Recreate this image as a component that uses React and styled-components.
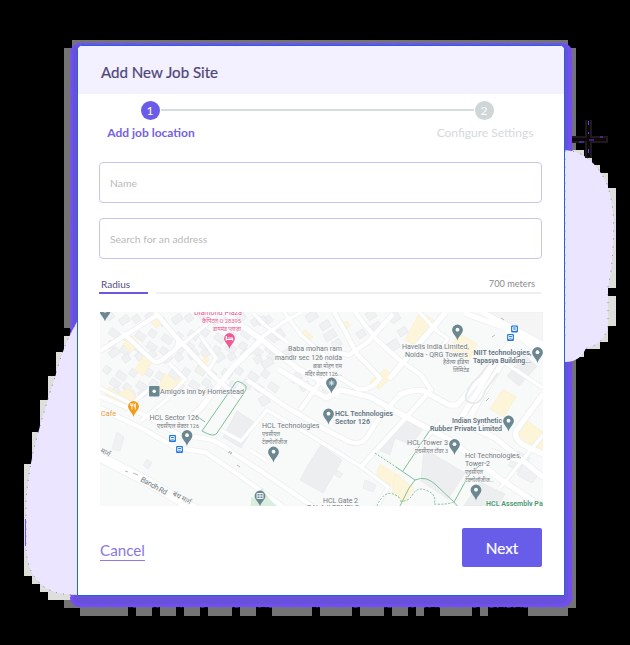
import React from 'react';
import styled, { createGlobalStyle } from 'styled-components';

const GlobalStyle = createGlobalStyle`
  * { box-sizing: border-box; }
  body { margin: 0; background: #000; font-family: Lato, sans-serif; }
`;

const Stage = styled.main`
  position: relative;
  width: 630px;
  height: 645px;
  padding: 45px 64px 0 77px;
  background: #000;
  overflow: hidden;
`;

const Backdrop = styled.svg`
  position: absolute;
  inset: 0;
`;

const Card = styled.section`
  position: relative;
  width: 488px;
  height: 551px;
  border: 1px solid #1f66d8;
  border-radius: 5px 5px 0 0;
  background: #fff;
  overflow: hidden;
`;

const Header = styled.header`
  height: 48px;
  padding: 3px 23px 0;
  display: flex;
  align-items: center;
  background: #f3f0ff;
`;

const Title = styled.h1`
  margin: 0;
  font-size: 15.1px;
  line-height: 20px;
  font-weight: 400;
  color: #4d4677;
  -webkit-text-stroke: 0.2px #4d4677;
`;

const Stepper = styled.div`
  display: grid;
  grid-template-columns: 88px 1fr 98px;
  height: 48px;
  margin: 6px 30px 0 29px;
`;

const Step = styled.div`
  display: flex;
  flex-direction: column;
  align-items: center;
  white-space: nowrap;
  font-size: 12px;
  line-height: 16px;
  font-weight: ${(p) => (p.$active ? 700 : 400)};
  color: ${(p) => (p.$active ? '#7561e2' : '#d5d9dc')};
`;

const StepDot = styled.span`
  display: grid;
  place-items: center;
  width: 19px;
  height: 19px;
  margin: 1px 2px 5px 0;
  border-radius: 50%;
  font-size: 12px;
  font-weight: 400;
  color: #fff;
  background: ${(p) => (p.$active ? '#6a5be9' : '#ced6d8')};
`;

const StepLine = styled.div`
  height: 2px;
  margin: 9px -38px 0 -34px;
  background: #d7dcde;
`;

const Form = styled.div`
  padding: 14px 22px 0 21px;
`;

const Field = styled.input`
  display: block;
  width: 443px;
  height: 41px;
  margin-bottom: 15px;
  padding: 0 10px;
  border: 1px solid #c9c3ee;
  border-radius: 4px;
  outline: 0;
  background: #fff;
  font: 400 10.4px Lato, sans-serif;
  color: #444;
  &::placeholder { color: #b9b9bb; opacity: 1; }
`;

const RadiusRow = styled.div`
  display: grid;
  grid-template-columns: 49px 1fr;
  column-gap: 8px;
  width: 442px;
  height: 20px;
  margin-top: 15px;
`;

const RadiusLabel = styled.div`
  padding-left: 2px;
  height: 20px;
  border-bottom: 2px solid #6a59df;
  font-size: 10px;
  line-height: 21px;
  color: #554b84;
`;

const RadiusValue = styled.div`
  height: 20px;
  padding-right: 6px;
  border-bottom: 2px solid #efeff1;
  text-align: right;
  font-size: 9.2px;
  line-height: 19px;
  color: #8b8b8d;
`;

const MapView = styled.svg`
  display: block;
  margin: 18px 0 0 1px;
`;

const Footer = styled.footer`
  display: flex;
  justify-content: space-between;
  align-items: center;
  width: 443px;
  height: 39px;
  margin-top: 22px;
  padding-left: 1px;
`;

const CancelLink = styled.button`
  height: 20px;
  margin-top: 6px;
  padding: 0;
  border: 0;
  border-bottom: 1px solid #8d7be7;
  background: none;
  font: 400 15.2px/18px Lato, sans-serif;
  color: #8977e4;
`;

const NextButton = styled.button`
  width: 80px;
  height: 39px;
  padding: 0;
  border: 0;
  border-radius: 2px;
  background: #685de9;
  color: #fff;
  font: 400 15.3px Lato, sans-serif;
  -webkit-text-stroke: 0.2px #fff;
`;

const streets = [
  [5, 'M100 351L159 314M123 333L152 360Q156 364 162 360L175 350Q181 342 176 336M155 312L177 338L213 376L240 399'],
  [6, 'M262 339L233 367L201 408L188 420M224 312L240 324L262 340L298 369L316 378L338 396'],
  [4, 'M169 363L185 379L167 399L141 421M100 388L132 404L150 388M175 350L207 324L218 312M201 337L216 358L208 371'],
  [4, 'M262 337L285 321L302 312M253 313L266 326L288 343M284 312L301 335L318 350L333 363'],
  [5, 'M334 312L345 331L357 354L380 378Q372 391 358 389L334 374L320 382L300 410'],
  [5, 'M329 351L349 355L368 342L393 314M355 312L376 339L397 358L421 375L431 390L400 424L360 468'],
  [6, 'M278 369L326 398L341 390L370 397L395 411L450 440L500 479L541 506'],
  [5, 'M247 380L288 408L326 430L350 442Q363 446 369 434L377 421L399 396'],
  [5, 'M100 396L149 417L181 436L202 438Q219 440 233 453L267 475L312 506'],
  [5, 'M100 408L145 430L176 448L205 452L236 473L282 506'],
  [4, 'M221 430L241 441L267 410L308 434L360 466L388 487L377 507M250 450L267 461'],
  [10, 'M98 456L150 483L203 514'],
  [6, 'M399 395Q413 389 424 391L449 405L457 405L499 357L525 325M446 312L405 360L389 379'],
  [6, 'M499 355L478 391L459 421L495 438L544 478M513 346L486 389L471 415'],
  [6, 'M464 313L511 330L543 355M543 394L516 431Q514 438 522 444L543 454'],
  [4, 'M419 312L437 331L448 339L433 357M486 350L504 362L543 388M440 422L410 458M491 450L521 462L543 435M500 488L521 462'],
];

const SAND = '#fdf5da';
const GREY = '#eceef0';
const PALE = '#eff1f2';

const buildings = [
  [SAND, '132 336 140 345 130 352 123 344'],
  [SAND, '143 356 153 361 143 376 135 370'],
  [SAND, '109 387 119 394 128 388 139 401 127 411 104 399'],
  [SAND, '165 373 175 381 180 377 178 393 162 391 159 385'],
  [SAND, '205 356 209 359 203 371 199 368'],
  [SAND, '157 317 162 323 156 328 151 322'],
  [SAND, '305 330 313 337 306 342 299 334'],
  [SAND, '347 321 350 326 344 330 341 324'],
  [SAND, '385 369 394 376 379 389 369 382'],
  [SAND, '420 312 437 322 416 346 405 340'],
  [SAND, '458 333 477 344 469 361 450 350'],
  [SAND, '503 389 516 397 504 417 490 409'],
  [SAND, '524 418 543 432 543 450 516 438'],
  [SAND, '380 464 401 477 395 488 376 476'],
  [SAND, '395 474 414 488 405 503 392 493'],
  [GREY, '321 445 342 460 323 493 300 480 308 465'],
  [GREY, '402 419 423 429 411 445 395 438 390 455 379 450'],
  [GREY, '424 449 465 473 448 499 421 481'],
  [GREY, '480 482 505 494 498 506 464 506'],
  [GREY, '237 411 256 423 241 448 223 437'],
  [PALE, '518 451 530 458 520 473 508 465'],
  [PALE, '523 464 540 473 532 483 517 475'],
  [GREY, '524 355 537 366 519 386 507 376'],
  [PALE, '117 432 124 437 120 451 112 449'],
  [PALE, '147 459 152 463 148 469 143 465'],
  [PALE, '337 470 343 474 340 478 335 475'],
  [PALE, '365 480 376 485 373 492 363 488'],
];

// Small house footprints: x, y, width, height, rotation
const houses = Array.from({ length: 92 }, (_, i) => {
  const row = Math.floor(i / 13);
  const col = i % 13;
  return [
    105 + col * 13.2 + ((row * 7) % 9),
    315 + row * 12.5 + ((col * 5) % 7),
    7 + ((i * 3) % 6),
    7 + ((i * 5) % 5),
    row % 3 === 0 ? -35 : 35,
  ];
}).filter(([x, y]) => y < 402 - (x - 105) * 0.12);

const blocks = [
  [305, 316, 11, 8], [319, 325, 10, 7], [323, 335, 12, 8], [273, 333, 9, 9], [256, 320, 9, 7],
  [365, 314, 9, 8], [369, 327, 11, 7], [388, 316, 10, 9], [384, 346, 14, 9], [397, 331, 9, 7],
  [261, 363, 11, 7], [289, 377, 11, 8], [299, 386, 10, 7], [258, 399, 9, 9], [322, 390, 10, 8],
  [282, 352, 8, 8], [331, 343, 9, 7], [356, 333, 8, 7],
];

const pins = [
  [105, 312], [457.5, 331], [537.5, 353.5], [331.5, 384, 'swirl'], [328.5, 415], [508.5, 422],
  [187, 436.5], [273.5, 453], [454.5, 445.5], [476, 491], [260, 497, 'grid'],
];

function Pin({ x, y, kind, color = '#6b8791' }) {
  return (
    <g transform={`translate(${x} ${y})`}>
      <path d="M0 9.5C-1 5-5.4 2.6-5.4-1A5.4 5.4 0 0 1 5.4-1C5.4 2.6 1 5 0 9.5Z" fill={color} />
      {!kind && <circle cy="-1.3" r="1.9" fill="#fff" />}
      {kind === 'swirl' && <path d="M-2.8-1H2.8M0-3.8V1.8M-2-3L2 1M2-3L-2 1" stroke="#e7eef0" strokeWidth=".8" />}
      {kind === 'grid' && <path d="M-3-3.5H3V1.5H-3ZM0-3.5V1.5M-3-1H3" fill="none" stroke="#fff" strokeWidth=".9" />}
      {kind === 'food' && <path d="M-1.6-4V2M-2.8-4V-2H-.5V-4M1.8 2V-4Q.4-2 .8-.5H1.8" fill="none" stroke="#fff" strokeWidth=".9" />}
      {kind === 'bed' && <path d="M-3.2-3.5V1M-3 0H3.2V1M-1.8-1.5H2.8V0" fill="none" stroke="#fff" strokeWidth="1.2" />}
    </g>
  );
}

function Transit({ x, y }) {
  return (
    <g transform={`translate(${x} ${y})`}>
      <rect x="-3.4" y="-3.4" width="6.8" height="6.8" rx="1" fill="#1f73e8" />
      <path d="M-1.8-2H1.8V1.5H-1.8ZM-1.8 0H1.8" fill="none" stroke="#fff" strokeWidth=".9" />
    </g>
  );
}

const Label = styled.text`
  font-family: Roboto, 'Noto Sans', sans-serif;
  font-size: ${(p) => p.$size || 7}px;
  font-weight: ${(p) => (p.$bold ? 600 : 400)};
  fill: ${(p) => p.$color || '#737b82'};
  paint-order: stroke;
  stroke: #fafafa;
  stroke-width: 1px;
`;

// Label text, x, baseline, width, anchor, colour, bold, font size
const labels = [
  ['Diamond Plaza', 242, 315, 48, 'end', '#e85b94'],
  ['कैपिटल O 28395', 241, 322.5, 39, 'end', '#e85b94', false, 6],
  ['डायमंड प्लाज़ा', 241, 331, 28, 'end', '#e85b94', false, 6],
  ["Amigo's inn by Homestead", 160, 394, 84, 'start'],
  ['Cafe', 101, 416, 15, 'start', '#ed9a35'],
  ['HCL Sector 126', 149.5, 420, 49.5, 'start'],
  ['एचसीएल सेक्टर 126', 157, 428, 42, 'start', null, false, 6],
  ['HCL Technologies', 262, 428, 57.5, 'start'],
  ['एचसीएल', 262, 436, 18, 'start', null, false, 6],
  ['टेक्नोलॉजीज', 262, 444, 25, 'start', null, false, 6],
  ['HCL Technologies', 335, 416, 58, 'start', '#5f747f', true],
  ['Sector 126', 335, 424, 35, 'start', '#5f747f', true],
  ['Baba mohan ram', 342, 351, 54, 'end'],
  ['mandir sec 126 noida', 342, 359.5, 67, 'end'],
  ['बाबा मोहन राम', 342, 367.5, 29, 'end', null, false, 6],
  ['मंदिर सेक्टर 126...', 342, 376, 37, 'end', null, false, 6],
  ['Havells India Limited,', 469, 348.5, 67, 'end'],
  ['Noida - QRG Towers', 468, 356.5, 63, 'end'],
  ['हैवेल्स इंडिया', 469, 364, 26, 'end', null, false, 6],
  ['लिमिटेड', 469, 372, 16, 'end', null, false, 6],
  ['NIIT technologies,', 473.5, 354.5, 58, 'start', '#5f747f', true],
  ['Tapasya Building...', 473, 362.5, 58, 'start', '#5f747f', true],
  ['Indian Synthetic', 502, 422.5, 50, 'end', '#5f747f', true],
  ['Rubber Private Limited', 502, 431, 72, 'end', '#5f747f', true],
  ['HCL Tower 3', 448, 445, 41, 'end'],
  ['एचसीएल टॉवर 3', 448, 453, 33, 'end', null, false, 6],
  ['Hcl Technologies,', 465, 458, 56, 'start'],
  ['Tower-2', 465, 466, 25, 'start'],
  ['एचसीएल', 465, 473.5, 18, 'start', null, false, 6],
  ['टेक्नोलॉजीज...', 465, 481.5, 29, 'start', null, false, 6],
  ['HCL Gate 2', 323, 502.5, 35, 'start'],
  ['BALAJI TEMPLE', 307, 510, 52, 'start'],
  ['HCL Assembly Park', 486, 506, 63, 'start', '#4a9a70', true],
];

function JobMap() {
  return (
    <MapView width="443" height="194" viewBox="100 312 443 194">
      <rect x="100" y="312" width="443" height="194" fill="#f8f9f9" />
      <g fill="#eff1f3" stroke="#e1e4e6" strokeWidth=".5">
        {houses.map(([x, y, w, h, r]) => (
          <rect key={`${x}-${y}`} x={x} y={y} width={w} height={h} transform={`rotate(${r} ${x} ${y})`} />
        ))}
        {blocks.map(([x, y, w, h]) => (
          <rect key={`${x}-${y}`} x={x} y={y} width={w} height={h} transform={`rotate(-32 ${x} ${y})`} />
        ))}
      </g>
      {buildings.map(([fill, points]) => (
        <polygon key={points} points={points} fill={fill} stroke={fill === SAND ? '#faedc4' : '#e2e5e7'} strokeWidth=".5" />
      ))}
      <g fill="none" stroke="#e9ebed" strokeLinejoin="round">
        {streets.map(([w, d]) => <path key={d} d={d} strokeWidth={w + 0.6} />)}
      </g>
      <g fill="none" stroke="#fff" strokeLinejoin="round">
        {streets.map(([w, d]) => <path key={d} d={d} strokeWidth={w - 0.6} />)}
      </g>
      <path d="M480 312L515 312L543 330V350L514 338Z" fill="#fff" />
      <path d="M488 312H543V341Z" fill="#f5f5f6" stroke="#e7e8e9" strokeWidth=".5" />
      <path d="M493 358L479 377Q471 382 467 393Q463 402 472 403Q481 405 485 391L498 373" fill="none" stroke="#e8eaeb" strokeWidth="2" />
      <path d="M251 506L262 491L276 506M250 506L255 501L265 506" fill="#d5eddb" />
      <path d="M250 506L262 488L274 506Z" fill="#d9eede" />
      <path d="M251 496L259 492V506H251Z" fill="#d9eede" />
      <path d="M251 497V490L259 499Z" fill="#f8f9f9" />
      <g fill="none" stroke="#82bf9c" strokeWidth="1">
        <path d="M202 431L236 382Q239 380 246 386Q247 389 244 393L217 433Q214 438 202 431ZM198 417L205 422" />
        <path d="M430 430L403 471M396 467L415 480L409 488L400 506M415 480Q426 475 436 485L454 502L469 475L481 464M454 502L459 508" />
        <path strokeDasharray="2 1.5" d="M400 501Q409 502 413 494Q418 486 428 491Q437 495 434 504Q446 505 454 502M375 453L399 469M377 506Q386 485 401 499" />
      </g>
      <path d="M229 451l3 2-2 1m-2-1 2-1M237 465l3 2M128 472l-3-1m8 2 5 2M501 318l3 2M492 337l3-2M486 401l3-3" stroke="#b3babd" fill="none" />
      {labels.map(([text, x, y, w, anchor, color, bold, size], i) => (
        <Label
          key={i}
          x={x}
          y={y}
          textLength={w}
          lengthAdjust="spacingAndGlyphs"
          textAnchor={anchor}
          $color={color}
          $bold={bold}
          $size={size}
        >
          {text}
        </Label>
      ))}
      <Label transform="translate(140 481) rotate(29)" textLength="29" $size={7.5}>Bandh Rd</Label>
      <Label transform="translate(172 495) rotate(29)" textLength="20" $size={7}>बंध मार्ग</Label>
      <Label transform="translate(100 452) rotate(29)" textLength="10" $size={7}>मार्ग</Label>
      {pins.map(([x, y, kind]) => <Pin key={`${x}-${y}`} x={x} y={y} kind={kind} />)}
      <Pin x={133.5} y={407.5} kind="food" color="#f29b16" />
      <Pin x={229.5} y={339.5} kind="bed" color="#ec5c94" />
      <rect x="149" y="386" width="10.5" height="10.5" rx="1" fill="#6b8791" />
      <circle cx="154.2" cy="391.3" r="1.8" fill="#fff" />
      <Transit x={514.5} y={329} />
      <Transit x={510.5} y={337.5} />
      <Transit x={172.5} y={438.5} />
      <Transit x={179.5} y={449.5} />
    </MapView>
  );
}

const shadowBlocks = [
  [72, 40, 496, 10], [64, 48, 14, 280], [560, 48, 16, 104], [560, 352, 16, 256], [64, 592, 20, 16],
  [80, 600, 48, 16], [136, 600, 16, 16], [160, 600, 16, 16], [184, 600, 16, 16], [208, 600, 24, 16],
  [240, 600, 16, 16], [272, 600, 40, 16], [320, 600, 32, 16], [360, 600, 24, 16], [392, 600, 16, 16],
  [416, 600, 8, 16], [440, 600, 32, 16], [480, 600, 8, 16], [528, 600, 40, 16],
];

const haloBlocks = [
  [64, 336, 14, 20], [56, 352, 20, 30], [48, 376, 20, 30], [40, 400, 20, 38], [32, 432, 20, 40],
  [24, 464, 20, 112], [32, 568, 20, 16], [40, 576, 20, 16], [48, 584, 24, 16],
  [568, 150, 16, 10], [576, 158, 16, 14], [584, 165, 16, 16], [592, 173, 16, 24], [600, 188, 16, 100],
  [592, 278, 24, 9], [600, 296, 16, 30], [592, 316, 16, 26], [584, 334, 16, 15], [568, 344, 16, 13],
];

function BackgroundArt() {
  return (
    <Backdrop width="630" height="645" viewBox="0 0 630 645" aria-hidden="true">
      <g fill="#747474" shapeRendering="crispEdges">
        {shadowBlocks.map(([x, y, w, h]) => <rect key={`${x}-${y}`} x={x} y={y} width={w} height={h} />)}
      </g>
      <g fill="#dededb" shapeRendering="crispEdges">
        {haloBlocks.map(([x, y, w, h]) => <rect key={`${x}-${y}`} x={x} y={y} width={w} height={h} />)}
      </g>
      <rect x="70.5" y="43" width="501.5" height="564" rx="9" fill="#7050ed" />
      <rect x="73" y="45" width="495" height="559" rx="8" fill="#6850dd" />
      <rect x="70.5" y="43" width="501.5" height="564" rx="9" fill="none" stroke="#7456ff" strokeDasharray="2 3 4 2 1 5" />
      <path d="M78 320Q63 345 56 374Q48 398 40 426Q29 463 26 500V548Q27 569 37 580Q48 595 78 595Z" fill="#ebe5ff" stroke="#7354ee" strokeWidth=".8" strokeDasharray="1 6" />
      <path d="M25.5 519V546" stroke="#7354ff" />
      <path d="M565 150Q592 152 607 184Q616 210 613 247Q612 270 608 287V326Q604 346 582 349Q576 353 565 353Z" fill="#ebe5ff" stroke="#7354ee" strokeWidth=".8" strokeDasharray="1 7" />
      <path d="M565 342Q575 353 587 345Q582 362 565 362Z" fill="#ebe5ff" />
      <path d="M585 120H592V158H585ZM572 136H608V143H572Z" fill="#1b1b1b" />
      <path d="M572 139.5H606M588.5 120V157" stroke="#110508" strokeWidth="3" />
      <path d="M579 142H584M589 140H594M600 137H603M588.5 121V125M588.5 132V134M588.5 149V153" stroke="#5545ff" />
    </Backdrop>
  );
}

export default function App() {
  return (
    <>
      <GlobalStyle />
      <Stage>
        <BackgroundArt />
        <Card>
          <Header><Title>Add New Job Site</Title></Header>
          <Stepper>
            <Step $active><StepDot $active>1</StepDot>Add job location</Step>
            <StepLine />
            <Step><StepDot>2</StepDot>Configure Settings</Step>
          </Stepper>
          <Form>
            <Field placeholder="Name" aria-label="Name" />
            <Field placeholder="Search for an address" aria-label="Address" />
            <RadiusRow>
              <RadiusLabel>Radius</RadiusLabel>
              <RadiusValue>700 meters</RadiusValue>
            </RadiusRow>
            <JobMap />
            <Footer>
              <CancelLink>Cancel</CancelLink>
              <NextButton>Next</NextButton>
            </Footer>
          </Form>
        </Card>
      </Stage>
    </>
  );
}
